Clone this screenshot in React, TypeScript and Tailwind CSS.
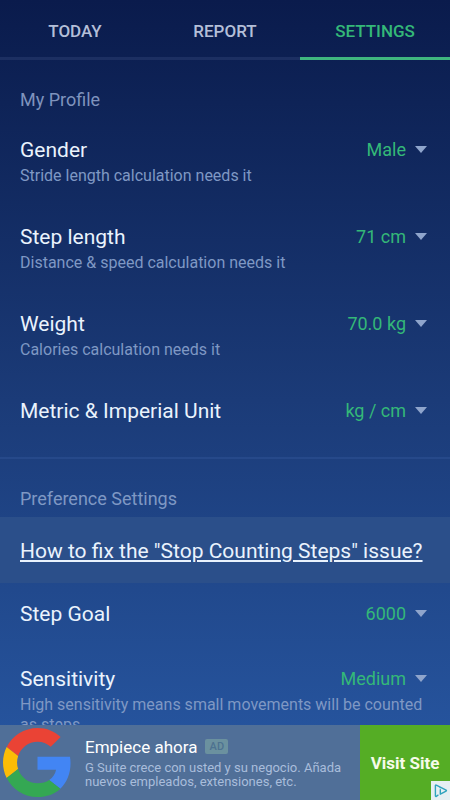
import { useState } from "react";

type Setting = {
  id: string;
  title: string;
  options: string[];
  hint?: string;
};

const PROFILE: Setting[] = [
  {
    id: "gender",
    title: "Gender",
    options: ["Male", "Female"],
    hint: "Stride length calculation needs it",
  },
  {
    id: "step-length",
    title: "Step length",
    options: ["71 cm", "72 cm"],
    hint: "Distance & speed calculation needs it",
  },
  {
    id: "weight",
    title: "Weight",
    options: ["70.0 kg", "71.0 kg"],
    hint: "Calories calculation needs it",
  },
  { id: "unit", title: "Metric & Imperial Unit", options: ["kg / cm", "lbs / ft"] },
];

const PREFERENCES: Setting[] = [
  { id: "goal", title: "Step Goal", options: ["6000", "8000"] },
  {
    id: "sensitivity",
    title: "Sensitivity",
    options: ["Medium", "Low", "High"],
    hint: "High sensitivity means small movements will be counted as steps",
  },
];

const TABS = ["TODAY", "REPORT", "SETTINGS"];

function SettingRow({ setting }: { setting: Setting }) {
  const [value, setValue] = useState(setting.options[0]);

  return (
    <div>
      <div className="flex h-7 items-center justify-between">
        <label htmlFor={setting.id} className="text-[21px] leading-7 text-[#eaf3fd]">
          {setting.title}
        </label>
        <div className="relative flex items-center">
          <select
            id={setting.id}
            value={value}
            onChange={(e) => setValue(e.target.value)}
            className="field-sizing-content appearance-none bg-transparent pr-6 text-right text-lg leading-7 text-[#34b878] outline-none"
          >
            {setting.options.map((o) => (
              <option key={o}>{o}</option>
            ))}
          </select>
          <svg
            viewBox="0 0 12 7"
            className="pointer-events-none absolute top-2.5 right-[3px] h-[7px] w-3 fill-[#8fa5cc]"
            aria-hidden="true"
          >
            <path d="M0 0h12L6 7z" />
          </svg>
        </div>
      </div>
      {setting.hint && (
        <p className="mt-0.5 text-base leading-5 text-[#7f98c4]">{setting.hint}</p>
      )}
    </div>
  );
}

function GoogleLogo() {
  return (
    <svg viewBox="0 0 48 48" className="size-[69px] shrink-0" aria-hidden="true">
      <path
        fill="#EA4335"
        d="M24 9.5c3.54 0 6.71 1.22 9.21 3.6l6.85-6.85C35.9 2.38 30.47 0 24 0 14.62 0 6.51 5.38 2.56 13.22l7.98 6.19C12.43 13.72 17.74 9.5 24 9.5z"
      />
      <path
        fill="#4285F4"
        d="M46.98 24.55c0-1.57-.15-3.09-.38-4.55H24v9.02h12.94c-.58 2.96-2.26 5.48-4.78 7.18l7.73 6c4.51-4.18 7.09-10.36 7.09-17.65z"
      />
      <path
        fill="#FBBC05"
        d="M10.53 28.59c-.48-1.45-.76-2.99-.76-4.59s.27-3.14.76-4.59l-7.98-6.19C.92 16.46 0 20.12 0 24c0 3.88.92 7.54 2.56 10.78l7.97-6.19z"
      />
      <path
        fill="#34A853"
        d="M24 48c6.48 0 11.93-2.13 15.89-5.81l-7.73-6c-2.15 1.45-4.92 2.3-8.16 2.3-6.26 0-11.57-4.22-13.47-9.91l-7.98 6.19C6.51 42.62 14.62 48 24 48z"
      />
    </svg>
  );
}

function AdBanner() {
  return (
    <footer className="relative flex h-[75px] shrink-0 bg-[#506f98]">
      <div className="flex min-w-0 flex-1 items-center gap-[13px] pl-[3px]">
        <GoogleLogo />
        <div className="min-w-0 pb-0.5">
          <div className="flex items-center gap-2">
            <h2 className="text-[17px] leading-6 text-white">Empiece ahora</h2>
            <span className="rounded-xs bg-[#6b919f] px-1 text-[11px] leading-[15px] font-medium tracking-wide text-[#4d7290]">
              AD
            </span>
          </div>
          <p className="mt-0.5 text-[13px] leading-[14px] text-[#a9bddb]">
            G Suite crece con usted y su negocio. Añada nuevos empleados, extensiones, etc.
          </p>
        </div>
      </div>
      <button className="w-[90px] shrink-0 bg-[#55ad25] pt-0.5 text-[17px] font-bold text-[#f6fbe9]">
        Visit Site
      </button>
      <button
        className="absolute right-0 bottom-0 size-[19px] bg-[#e6eff2]"
        aria-label="AdChoices"
      >
        <svg viewBox="0 0 19 19" className="size-[19px]" fill="none" stroke="#2fa3bd">
          <path
            d="M7 14.2l-1.7 1.1c-.5.3-.9.1-.9-.5V4.6c0-.6.4-.8.9-.5l9.8 5c.5.3.5.7 0 1L9.3 13.2V8.8"
            strokeWidth="1.4"
            strokeLinejoin="round"
            strokeLinecap="round"
          />
          <path d="M9.3 6v1.3" strokeWidth="1.4" />
        </svg>
      </button>
    </footer>
  );
}

export default function App() {
  const [tab, setTab] = useState("SETTINGS");

  return (
    <div className="flex h-screen flex-col overflow-hidden bg-linear-to-b from-[#0a1b4c] via-[#1b3b78] to-[#2859a5] font-[Roboto,sans-serif]">
      <nav className="grid h-[60px] shrink-0 grid-cols-3">
        {TABS.map((t) => (
          <button
            key={t}
            onClick={() => setTab(t)}
            className={`border-b-3 pt-1.5 text-[17px] font-medium ${
              t === tab
                ? "border-[#3fb67f] text-[#34b878]"
                : "border-[#1c2f62] text-[#b4bfd8]"
            }`}
          >
            {t}
          </button>
        ))}
      </nav>

      <main className="min-h-0 flex-1 overflow-hidden">
        <section className="border-b-2 border-[#26498a] px-5 pt-7 pb-8">
          <h2 className="mb-6 text-lg leading-6 text-[#7f93bd]">My Profile</h2>
          <div className="flex flex-col gap-[37px]">
            {PROFILE.map((s) => (
              <SettingRow key={s.id} setting={s} />
            ))}
          </div>
        </section>

        <section className="pt-7">
          <h2 className="px-5 pb-1.5 text-lg leading-6 text-[#7f98c4]">
            Preference Settings
          </h2>
          <a
            href="#fix"
            className="block bg-[#2b4f8a] px-5 pt-5 pb-[18px] text-[21px] leading-7 text-[#eaf3fd] underline"
          >
            How to fix the "Stop Counting Steps" issue?
          </a>
          <div className="flex flex-col gap-[37px] px-5 pt-[17px]">
            {PREFERENCES.map((s) => (
              <SettingRow key={s.id} setting={s} />
            ))}
          </div>
        </section>
      </main>

      <AdBanner />
    </div>
  );
}
